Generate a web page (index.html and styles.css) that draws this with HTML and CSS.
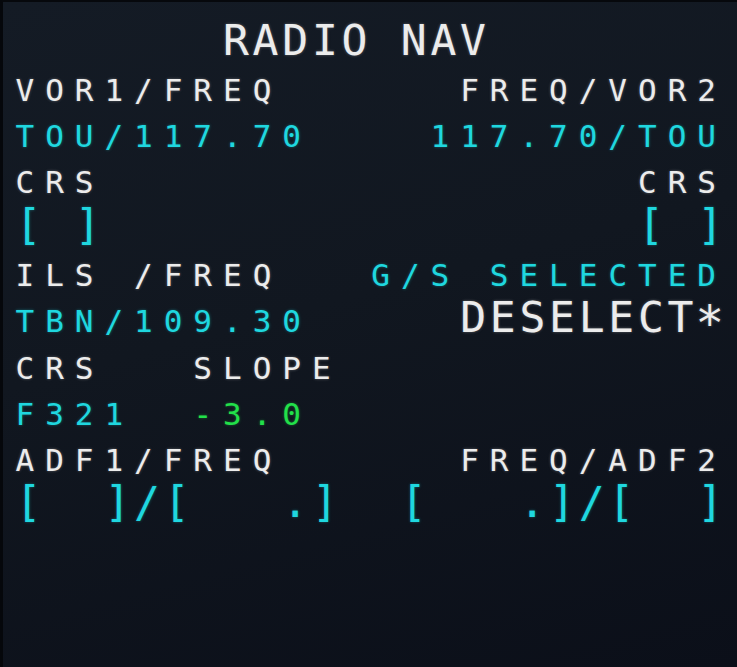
FILE: index.html
```html
<!DOCTYPE html>
<html lang="en">
<head>
  <meta charset="UTF-8">
  <meta name="viewport" content="width=device-width, initial-scale=1.0">
  <title>MCDU - Radio Nav</title>
  <link rel="stylesheet" href="styles.css">
</head>
<body>
  <!-- MCDU ekranı: 24 sütun, her satır sabit yükseklikte -->
  <div class="screen">
    <div class="line"><span class="lg w">       RADIO NAV</span></div>

    <div class="line"><span class="w">VOR1/FREQ      FREQ/VOR2</span></div>
    <div class="line"><span class="c">TOU/117.70    117.70/TOU</span></div>

    <div class="line"><span class="w">CRS                  CRS</span></div>
    <div class="line"><span class="lg c br">[ ]                  [ ]</span></div>

    <div class="line"><span class="w">ILS /FREQ   </span><span class="c">G/S SELECTED</span></div>
    <div class="line"><span class="c">TBN/109.30     </span><span class="lg w">DESELECT<span class="star">*</span></span></div>

    <div class="line"><span class="w">CRS   SLOPE</span></div>
    <div class="line"><span class="c">F321  </span><span class="g">-3.0</span></div>

    <div class="line"><span class="w">ADF1/FREQ      FREQ/ADF2</span></div>
    <div class="line"><span class="lg c br">[  ]/[   .]  [   .]/[  ]</span></div>

    <!-- boş satırlar -->
    <div class="line"></div>
    <div class="line"></div>
  </div>
</body>
</html>
```
FILE: styles.css
```css
body {
  margin: 0;
  background: #0b0f18;
}
.screen {
  width: 737px;
  height: 667px;
  box-sizing: border-box;
  padding: 18.5px 0 0 12.5px;
  border-left: 3px solid #05070b;
  border-top: 2px solid #06080c;
  background: linear-gradient(165deg, #141b25 0%, #111720 45%, #0b0f19 100%);
  font-family: "DejaVu Sans Mono", monospace;
  overflow: hidden;
}
.line {
  height: 46.3px;
  font-size: 31px;
  line-height: 46.3px;
  letter-spacing: 10.98px;
  white-space: pre;
}
.lg {
  font-size: 43px;
  line-height: 38.9px;
  letter-spacing: 3.75px;
}
.br {
  vertical-align: 3px;
}
.star {
  display: inline-block;
  transform: translateY(7px) scale(1.1);
}
.w {
  color: #ececec;
  text-shadow: 0 0 3px rgba(236, 236, 236, 0.35);
}
.c {
  color: #1fd7df;
  text-shadow: 0 0 3px rgba(31, 215, 223, 0.4);
}
.g {
  color: #22e04a;
  text-shadow: 0 0 3px rgba(34, 224, 74, 0.4);
}
```
